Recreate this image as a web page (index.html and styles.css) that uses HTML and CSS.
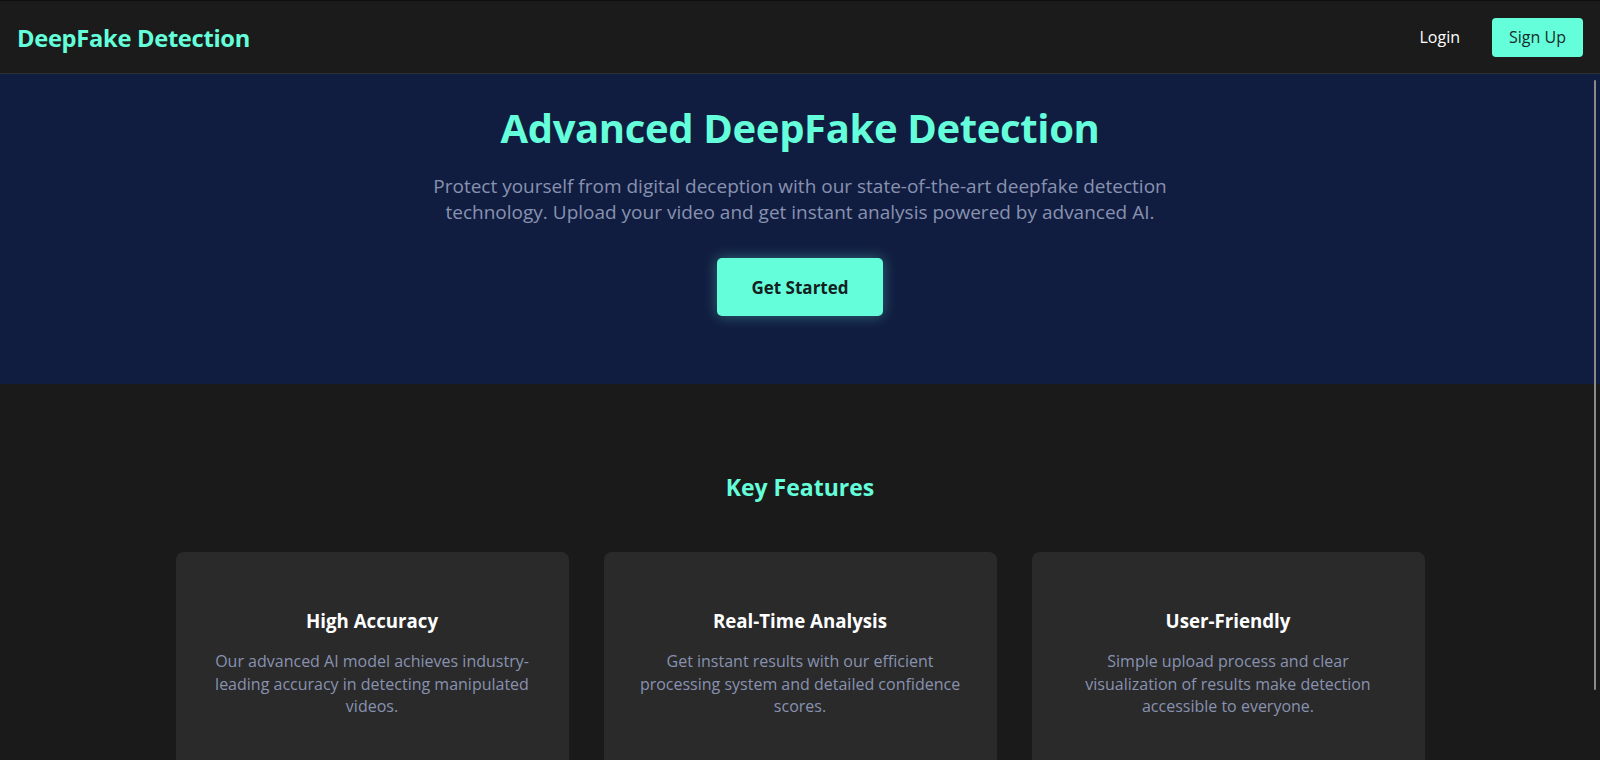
FILE: index.html
```html
<!DOCTYPE html>
<html lang="en">
<head>
<meta charset="utf-8">
<title>DeepFake Detection</title>
<link rel="stylesheet" href="styles.css">
</head>
<body>
<nav class="nav">
  <div class="logo">DeepFake Detection</div>
  <div class="nav-links">
    <a class="nav-login" href="#">Login</a>
    <a class="nav-signup" href="#">Sign Up</a>
  </div>
</nav>
<section class="hero">
  <h1 class="hero-title">Advanced DeepFake Detection</h1>
  <p class="hero-text">Protect yourself from digital deception with our state-of-the-art deepfake detection technology. Upload your video and get instant analysis powered by advanced AI.</p>
  <a class="hero-btn" href="#">Get Started</a>
</section>
<section class="features">
  <h2 class="features-title">Key Features</h2>
  <div class="features-grid">
    <div class="card">
      <h3 class="card-title">High Accuracy</h3>
      <p class="card-text">Our advanced AI model achieves industry-leading accuracy in detecting manipulated videos.</p>
    </div>
    <div class="card">
      <h3 class="card-title">Real-Time Analysis</h3>
      <p class="card-text">Get instant results with our efficient processing system and detailed confidence scores.</p>
    </div>
    <div class="card">
      <h3 class="card-title">User-Friendly</h3>
      <p class="card-text">Simple upload process and clear visualization of results make detection accessible to everyone.</p>
    </div>
  </div>
</section>
<div class="scroll-thumb"></div>
</body>
</html>
```

FILE: styles.css
```css
* { box-sizing: border-box; }
html, body { margin: 0; padding: 0; }
body {
  background: #1a1a1a;
  font-family: "Open Sans", "Noto Sans", sans-serif;
  color: #ffffff;
  overflow: hidden;
  height: 760px;
}
.nav {
  height: 74px;
  display: flex;
  align-items: center;
  justify-content: space-between;
  padding: 0 17px;
  background: #1b1b1b;
  border-top: 1px solid #0e0e0e;
  border-bottom: 1px solid #2b3433;
}
.logo {
  color: #64ffda;
  font-size: 23.7px;
  font-weight: 700;
  letter-spacing: -0.3px;
  padding-top: 2px;
}
.nav-links {
  display: flex;
  align-items: center;
}
.nav-login {
  color: #ffffff;
  text-decoration: none;
  font-size: 16px;
  margin-right: 32px;
}
.nav-signup {
  display: flex;
  align-items: center;
  justify-content: center;
  width: 91px;
  height: 39px;
  background: #64ffda;
  color: #1a2a2a;
  text-decoration: none;
  font-size: 16px;
  border-radius: 4px;
}
.hero {
  background: #111d40;
  padding: 30px 0 68px;
  display: flex;
  flex-direction: column;
  align-items: center;
  text-align: center;
}
.hero-title {
  margin: 0;
  color: #64ffda;
  font-size: 40px;
  line-height: 48px;
  font-weight: 700;
  letter-spacing: -0.35px;
}
.hero-text {
  margin: 21px 0 0;
  max-width: 770px;
  color: #8892b0;
  font-size: 19px;
  line-height: 26px;
}
.hero-btn {
  margin-top: 33px;
  width: 166px;
  height: 58px;
  display: flex;
  align-items: center;
  justify-content: center;
  background: #64ffda;
  color: #14201f;
  text-decoration: none;
  font-size: 17px;
  font-weight: 700;
  border-radius: 5px;
  box-shadow: 0 0 14px rgba(100, 255, 218, 0.35);
}
.features {
  padding-top: 89px;
  display: flex;
  flex-direction: column;
  align-items: center;
}
.features-title {
  margin: 0;
  color: #64ffda;
  font-size: 23px;
  line-height: 29px;
  font-weight: 700;
}
.features-grid {
  margin-top: 50px;
  display: grid;
  grid-template-columns: repeat(3, 393px);
  gap: 35px;
}
.card {
  background: #2a2a2a;
  border-radius: 8px;
  height: 260px;
  padding: 57px 36px 0;
  text-align: center;
}
.card-title {
  margin: 0;
  font-size: 18.7px;
  line-height: 24px;
  font-weight: 700;
  color: #ffffff;
}
.card-text {
  margin: 17px 0 0;
  color: #8892b0;
  font-size: 16px;
  line-height: 22.5px;
}
.scroll-thumb {
  position: fixed;
  right: 4px;
  top: 80px;
  width: 2px;
  height: 610px;
  background: #8a8a8a;
  border-radius: 1px;
}
```
